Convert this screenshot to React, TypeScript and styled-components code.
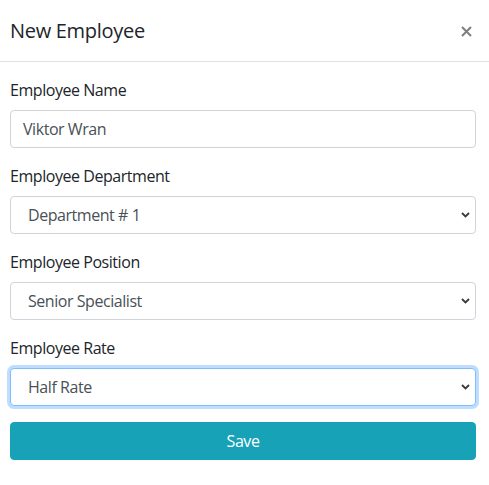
import React, { useState } from 'react'
import styled, { createGlobalStyle, css } from 'styled-components'

const FONT = `"Segoe UI", "Open Sans", "Noto Sans", Arial, sans-serif`
const TEXT = '#212529'
const FIELD_TEXT = '#495057'
const BORDER = '#ced4da'

const GlobalStyle = createGlobalStyle`
  html, body {
    margin: 0;
    padding: 0;
    background: #fff;
  }
  body {
    font-family: ${FONT};
    font-size: 16px;
    line-height: 1.5;
    color: ${TEXT};
    letter-spacing: -0.45px;
  }
  * {
    box-sizing: border-box;
  }
`

const Modal = styled.div`
  width: 489px;
  background: #fff;
`

const Header = styled.div`
  display: flex;
  align-items: flex-start;
  justify-content: space-between;
  padding: 16px 16px 15px 10px;
  border-bottom: 1px solid #dee2e6;
`

const Title = styled.h5`
  margin: 0;
  font-size: 20px;
  font-weight: 500;
  line-height: 1.5;
  letter-spacing: -0.3px;
  color: ${TEXT};
`

const CloseButton = styled.button`
  display: flex;
  align-items: center;
  justify-content: center;
  width: 14px;
  height: 30px;
  padding: 0;
  border: none;
  background: transparent;
  opacity: 0.5;
  cursor: pointer;
`

const Body = styled.form`
  padding: 16px 13px 16px 10px;
`

const Group = styled.div`
  margin-bottom: 16px;
`

const Label = styled.label`
  display: block;
  margin-bottom: 8px;
  font-size: 16px;
  line-height: 24px;
  color: ${TEXT};
`

const fieldBase = css`
  display: block;
  width: 100%;
  height: 38px;
  margin: 0;
  border: 1px solid ${BORDER};
  border-radius: 4px;
  background: #fff;
  font-family: ${FONT};
  font-size: 16px;
  line-height: 24px;
  letter-spacing: -0.45px;
  color: ${FIELD_TEXT};
  outline: none;
`

const Input = styled.input`
  ${fieldBase}
  padding: 6px 12px;
`

const SelectWrap = styled.div`
  position: relative;
`

const Select = styled.select<{ $focused?: boolean }>`
  ${fieldBase}
  appearance: none;
  -webkit-appearance: none;
  padding: 6px 28px 6px 17px;
  ${({ $focused }) =>
    $focused &&
    css`
      border-color: #80bdff;
      box-shadow: 0 0 0 3px rgba(0, 123, 255, 0.25);
    `}
`

const Chevron = styled.svg`
  position: absolute;
  right: 6px;
  top: 16px;
  pointer-events: none;
`

const SaveButton = styled.button`
  display: block;
  width: 100%;
  height: 38px;
  padding: 6px 12px;
  border: 1px solid #17a2b8;
  border-radius: 4px;
  background: #17a2b8;
  color: #fff;
  font-family: ${FONT};
  font-size: 16px;
  line-height: 24px;
  letter-spacing: -0.45px;
  cursor: pointer;
`

const ChevronIcon = () => (
  <Chevron width="9" height="6" viewBox="0 0 9 6">
    <path d="M1 1 L4.5 4.5 L8 1" fill="none" stroke="#3a3a3a" strokeWidth="1.8" />
  </Chevron>
)

interface SelectFieldProps {
  label: string
  value: string
  options: string[]
  focused?: boolean
  onChange: (v: string) => void
}

const SelectField = ({ label, value, options, focused, onChange }: SelectFieldProps) => (
  <Group>
    <Label>{label}</Label>
    <SelectWrap>
      <Select $focused={focused} value={value} onChange={(e) => onChange(e.target.value)}>
        {options.map((o) => (
          <option key={o}>{o}</option>
        ))}
      </Select>
      <ChevronIcon />
    </SelectWrap>
  </Group>
)

export default function App() {
  const [name, setName] = useState('Viktor Wran')
  const [dept, setDept] = useState('Department # 1')
  const [pos, setPos] = useState('Senior Specialist')
  const [rate, setRate] = useState('Half Rate')

  return (
    <>
      <GlobalStyle />
      <Modal>
        <Header>
          <Title>New Employee</Title>
          <CloseButton type="button" aria-label="Close">
            <svg width="11" height="11" viewBox="0 0 11 11">
              <path d="M1 1 L10 10 M10 1 L1 10" stroke="#000" strokeWidth="2" />
            </svg>
          </CloseButton>
        </Header>
        <Body onSubmit={(e) => e.preventDefault()}>
          <Group>
            <Label>Employee Name</Label>
            <Input value={name} onChange={(e) => setName(e.target.value)} />
          </Group>
          <SelectField
            label="Employee Department"
            value={dept}
            options={['Department # 1', 'Department # 2', 'Department # 3']}
            onChange={setDept}
          />
          <SelectField
            label="Employee Position"
            value={pos}
            options={['Junior Specialist', 'Specialist', 'Senior Specialist']}
            onChange={setPos}
          />
          <SelectField
            label="Employee Rate"
            value={rate}
            options={['Full Rate', 'Half Rate']}
            focused
            onChange={setRate}
          />
          <SaveButton type="submit">Save</SaveButton>
        </Body>
      </Modal>
    </>
  )
}
